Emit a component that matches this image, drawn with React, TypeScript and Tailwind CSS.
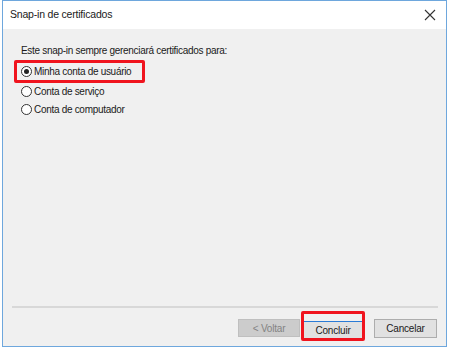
import React from "react";

function Radio({ checked }: { checked?: boolean }) {
  return (
    <span className="w-[11px] h-[11px] rounded-full border border-[#333] bg-white flex items-center justify-center shrink-0">
      {checked && <span className="w-[5px] h-[5px] rounded-full bg-[#222]" />}
    </span>
  );
}

export default function App() {
  return (
    <div
      className="w-[450px] h-[348px] bg-white overflow-hidden whitespace-nowrap"
      style={{ fontFamily: '"Liberation Sans", Arial, sans-serif' }}
    >
      <div className="ml-[2px] w-[445px] h-[347px] border border-[#6ea7dd] flex flex-col">
        <div className="h-[28px] bg-white flex items-center justify-between pl-[7px] pr-[9px] shrink-0">
          <span className="text-[10.5px] tracking-[-0.2px] text-[#1a1a1a]">Snap-in de certificados</span>
          <svg width="12" height="12" viewBox="0 0 12 12" className="mr-[1px]">
            <path d="M1 1 L11 11 M11 1 L1 11" stroke="#333" strokeWidth="1.1" />
          </svg>
        </div>
        <div className="flex-1 bg-[#f0f0f0] flex flex-col">
          <div className="pl-[18px] pt-[15px] text-[10px] tracking-[-0.3px] text-[#1a1a1a] leading-[13px]">
            Este snap-in sempre gerenciará certificados para:
          </div>
          <div className="pl-[11px] mt-[3px]">
            <div className="w-[131px] h-[23px] border-[3px] border-[#f0141e] rounded-[2px] flex items-center pl-[4px] gap-[2px]">
              <Radio checked />
              <span className="text-[10px] tracking-[-0.3px] text-[#1a1a1a]">Minha conta de usuário</span>
            </div>
          </div>
          <div className="pl-[18px] mt-[1px] flex items-center gap-[2px] h-[14px]">
            <Radio />
            <span className="text-[10px] tracking-[-0.3px] text-[#1a1a1a]">Conta de serviço</span>
          </div>
          <div className="pl-[18px] mt-[4px] flex items-center gap-[2px] h-[14px]">
            <Radio />
            <span className="text-[10px] tracking-[-0.3px] text-[#1a1a1a]">Conta de computador</span>
          </div>
          <div className="flex-1" />
          <div className="mx-[9px] h-[2px] bg-[#d8d8d8] mr-[8px]" />
          <div className="flex items-center justify-end pr-[9px] mt-[3px] mb-[5px]">
            <div className="w-[62px] h-[18px] bg-[#cccccc] border border-[#bfbfbf] flex items-center justify-center text-[10px] tracking-[-0.2px] text-[#838383] mt-[8px] self-start">
              &lt; Voltar
            </div>
            <div className="w-[64px] h-[30px] border-[3px] border-[#f0141e] rounded-[2px] ml-[1px] flex flex-col">
              <div className="mt-[7px] flex-1 bg-[#e1e1e1] border-t border-[#2a7bd6] flex items-center justify-center text-[10px] tracking-[-0.2px] text-[#1a1a1a]">
                Concluir
              </div>
            </div>
            <div className="ml-[9px] w-[63px] h-[19px] bg-[#e1e1e1] border border-[#adadad] flex items-center justify-center text-[10px] tracking-[-0.2px] text-[#1a1a1a] mt-[8px] self-start">
              Cancelar
            </div>
          </div>
        </div>
      </div>
    </div>
  );
}
